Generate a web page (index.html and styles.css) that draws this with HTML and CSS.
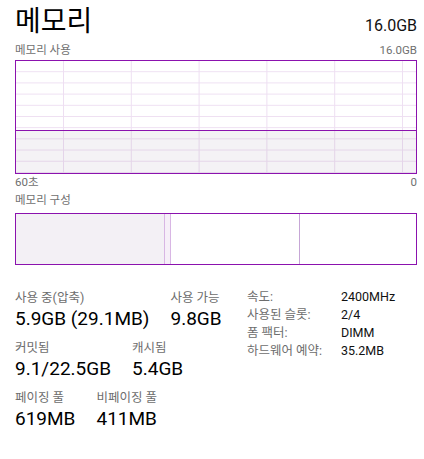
FILE: index.html
```html
<!DOCTYPE html>
<html lang="ko">
<head>
    <meta charset="UTF-8">
    <meta name="viewport" content="width=device-width, initial-scale=1.0">
    <title>메모리</title>
    <link rel="stylesheet" href="styles.css">
</head>
<body>
    <div class="panel">
        <div class="header">
            <h1 class="title">메모리</h1>
            <span class="total">16.0GB</span>
        </div>

        <div class="caption-row top">
            <span>메모리 사용</span>
            <span>16.0GB</span>
        </div>
        <div class="graph">
            <div class="graph-fill"></div>
        </div>
        <div class="caption-row axis">
            <span>60초</span>
            <span>0</span>
        </div>

        <div class="caption-row comp">
            <span>메모리 구성</span>
        </div>
        <div class="composition">
            <div class="seg used"></div>
            <div class="seg modified"></div>
            <div class="seg standby"></div>
            <div class="seg free"></div>
        </div>

        <div class="stats">
            <div class="stats-left">
                <div class="stat-row">
                    <div class="stat">
                        <div class="stat-label">사용 중(압축)</div>
                        <div class="stat-value">5.9GB (29.1MB)</div>
                    </div>
                    <div class="stat">
                        <div class="stat-label">사용 가능</div>
                        <div class="stat-value">9.8GB</div>
                    </div>
                </div>
                <div class="stat-row">
                    <div class="stat">
                        <div class="stat-label">커밋됨</div>
                        <div class="stat-value">9.1/22.5GB</div>
                    </div>
                    <div class="stat">
                        <div class="stat-label">캐시됨</div>
                        <div class="stat-value">5.4GB</div>
                    </div>
                </div>
                <div class="stat-row">
                    <div class="stat">
                        <div class="stat-label">페이징 풀</div>
                        <div class="stat-value">619MB</div>
                    </div>
                    <div class="stat">
                        <div class="stat-label">비페이징 풀</div>
                        <div class="stat-value">411MB</div>
                    </div>
                </div>
            </div>

            <div class="stats-right">
                <span class="key">속도:</span><span class="val">2400MHz</span>
                <span class="key">사용된 슬롯:</span><span class="val">2/4</span>
                <span class="key">폼 팩터:</span><span class="val">DIMM</span>
                <span class="key">하드웨어 예약:</span><span class="val">35.2MB</span>
            </div>
        </div>
    </div>
</body>
</html>
```

FILE: styles.css
```css
body {
    margin: 0;
    background-color: #ffffff;
    font-family: Roboto, "Noto Sans CJK KR", sans-serif;
    color: #000000;
}
.panel {
    width: 402px;
    padding: 0 7px 0 15px;
}

/* header */
.header {
    display: flex;
    justify-content: space-between;
    align-items: baseline;
    height: 40px;
}
.title {
    margin: 0;
    font-size: 28px;
    font-weight: normal;
    line-height: 40px;
    padding-top: 2px;
}
.total {
    font-size: 16px;
    color: #111111;
}

/* small captions around graphs */
.caption-row {
    display: flex;
    justify-content: space-between;
    font-size: 11.5px;
    color: #707070;
}
.caption-row.top {
    height: 20px;
    line-height: 20px;
}
.caption-row.axis {
    height: 17px;
    line-height: 17px;
}
.caption-row.comp {
    height: 19px;
    line-height: 19px;
    margin-bottom: 3px;
}

/* usage graph */
.graph {
    height: 112px;
    border: 1px solid #8b12ae;
    display: flex;
    flex-direction: column;
    justify-content: flex-end;
    background-color: #ffffff;
    background-image:
        linear-gradient(to bottom, transparent calc(100% - 1px), #eedff2 calc(100% - 1px)),
        linear-gradient(to right, #eedff2 1px, transparent 1px);
    background-size: 100% 11.2px, 67.8px 100%;
    background-position: 0 0, 47px 0;
}
.graph-fill {
    height: 42px;
    border-top: 1px solid #8b12ae;
    background-color: rgba(120, 90, 130, 0.08);
}

/* composition bar */
.composition {
    display: flex;
    height: 50px;
    border: 1px solid #8b12ae;
}
.seg {
    height: 100%;
}
.used {
    width: 148px;
    background-color: #f3f0f5;
}
.modified {
    width: 5px;
    border-left: 1px solid #d8b6e4;
    border-right: 1px solid #d8b6e4;
    background-color: #f6eff8;
}
.standby {
    width: 128px;
    border-right: 1px solid #c6a6d6;
}
.free {
    flex: 1;
}

/* numbers */
.stats {
    display: flex;
    margin-top: 23px;
}
.stats-left {
    width: 232px;
}
.stat-row {
    display: flex;
    gap: 21px;
    margin-bottom: 7px;
}
.stat-label {
    font-size: 12.5px;
    line-height: 19px;
    color: #6d6d6d;
}
.stat-value {
    font-size: 19px;
    line-height: 24px;
    color: #000000;
}
.stats-right {
    display: grid;
    grid-template-columns: 94px auto;
    grid-auto-rows: 18px;
    align-content: start;
    font-size: 12.5px;
    line-height: 18px;
}
.key {
    color: #6d6d6d;
}
.val {
    color: #111111;
}
```
